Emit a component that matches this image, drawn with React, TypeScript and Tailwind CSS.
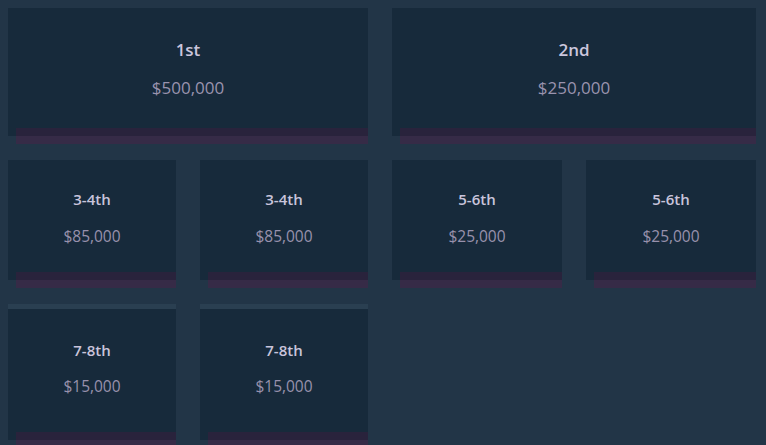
const prizes = [
  { place: '1st', amount: '$500,000', big: true },
  { place: '2nd', amount: '$250,000', big: true },
  { place: '3-4th', amount: '$85,000' },
  { place: '3-4th', amount: '$85,000' },
  { place: '5-6th', amount: '$25,000' },
  { place: '5-6th', amount: '$25,000' },
  { place: '7-8th', amount: '$15,000', last: true },
  { place: '7-8th', amount: '$15,000', last: true },
]

interface Prize {
  place: string
  amount: string
  big?: boolean
  last?: boolean
}

const PrizeCard = ({ place, amount, big, last }: Prize) => {
  if (big) {
    return (
      <div className="relative col-span-2 h-[128px] bg-[#172a3b] pt-[30px] flex flex-col items-center">
        <div className="text-[17px] leading-6 font-semibold text-[#cbc6dd]">{place}</div>
        <div className="mt-[14px] text-[17px] leading-6 text-[#9a93ae]">{amount}</div>
        {/* purple underline, half inside the card, half hanging below */}
        <div className="absolute left-2 right-0 -bottom-2 h-4 flex flex-col">
          <div className="h-2 bg-[#29233c]" />
          <div className="h-2 bg-[#362b47]" />
        </div>
      </div>
    )
  }

  return (
    <div
      className={`relative bg-[#172a3b] flex flex-col items-center ${
        last ? 'h-[136px] pt-[31px] border-t-[5px] border-[#2a3f51]' : 'h-[120px] pt-[29px]'
      }`}
    >
      <div className="text-[15px] leading-5 font-semibold text-[#c9c4db]">{place}</div>
      <div className={`${last ? 'mt-[16px]' : 'mt-[17px]'} text-[15.5px] leading-5 text-[#9891ac]`}>
        {amount}
      </div>
      <div className="absolute left-2 right-0 -bottom-2 h-4 flex flex-col">
        <div className="h-2 bg-[#29233c]" />
        <div className="h-2 bg-[#362b47]" />
      </div>
    </div>
  )
}

export default function App() {
  return (
    <div
      className="min-h-screen h-[445px] overflow-hidden bg-[#223547] p-2"
      style={{ fontFamily: '"Open Sans", "Noto Sans", sans-serif' }}
    >
      <div className="grid grid-cols-[168px_168px_170px_170px] gap-6 items-start">
        {prizes.map((p, i) => (
          <PrizeCard key={i} {...p} />
        ))}
      </div>
    </div>
  )
}
